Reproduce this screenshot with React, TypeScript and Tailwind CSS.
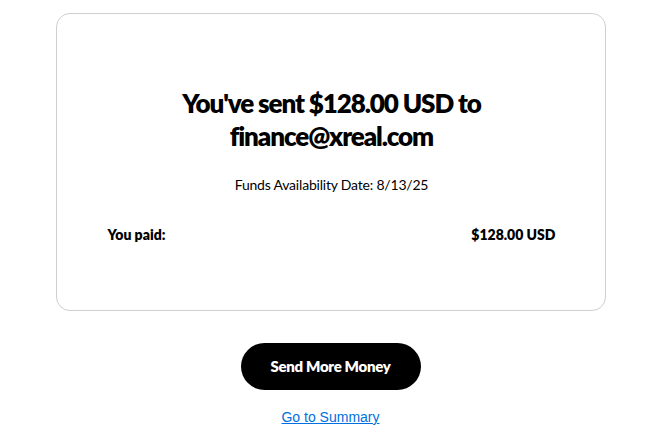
export default function App() {
  return (
    <div className="min-h-screen bg-white font-['Lato',sans-serif] text-black">
      <div className="pt-[13px] flex flex-col items-center">
        <div className="w-[550px] h-[298px] rounded-[14px] border border-[#cfcfcf] pl-[51px] pr-[49px] pt-[73px] flex flex-col">
          <h1 className="text-center text-[26px] leading-[33px] font-extrabold tracking-[-1.1px]">
            You've sent $128.00 USD to
            <br />
            finance@xreal.com
          </h1>
          <p className="mt-[22px] text-center text-[14px] leading-[20px] tracking-[-0.2px]">
            Funds Availability Date: 8/13/25
          </p>
          <div className="mt-[30px] flex justify-between text-[14px] leading-[20px] font-extrabold">
            <span>You paid:</span>
            <span>$128.00 USD</span>
          </div>
        </div>
        <button className="mt-[32px] w-[180px] h-[47px] rounded-full bg-black text-white text-[15px] font-extrabold tracking-[-0.3px]">
          Send More Money
        </button>
        <a href="#" className="mt-[17px] text-[14px] leading-[20px] text-[#0070e0] underline font-['Liberation_Sans',sans-serif]">
          Go to Summary
        </a>
      </div>
    </div>
  );
}
